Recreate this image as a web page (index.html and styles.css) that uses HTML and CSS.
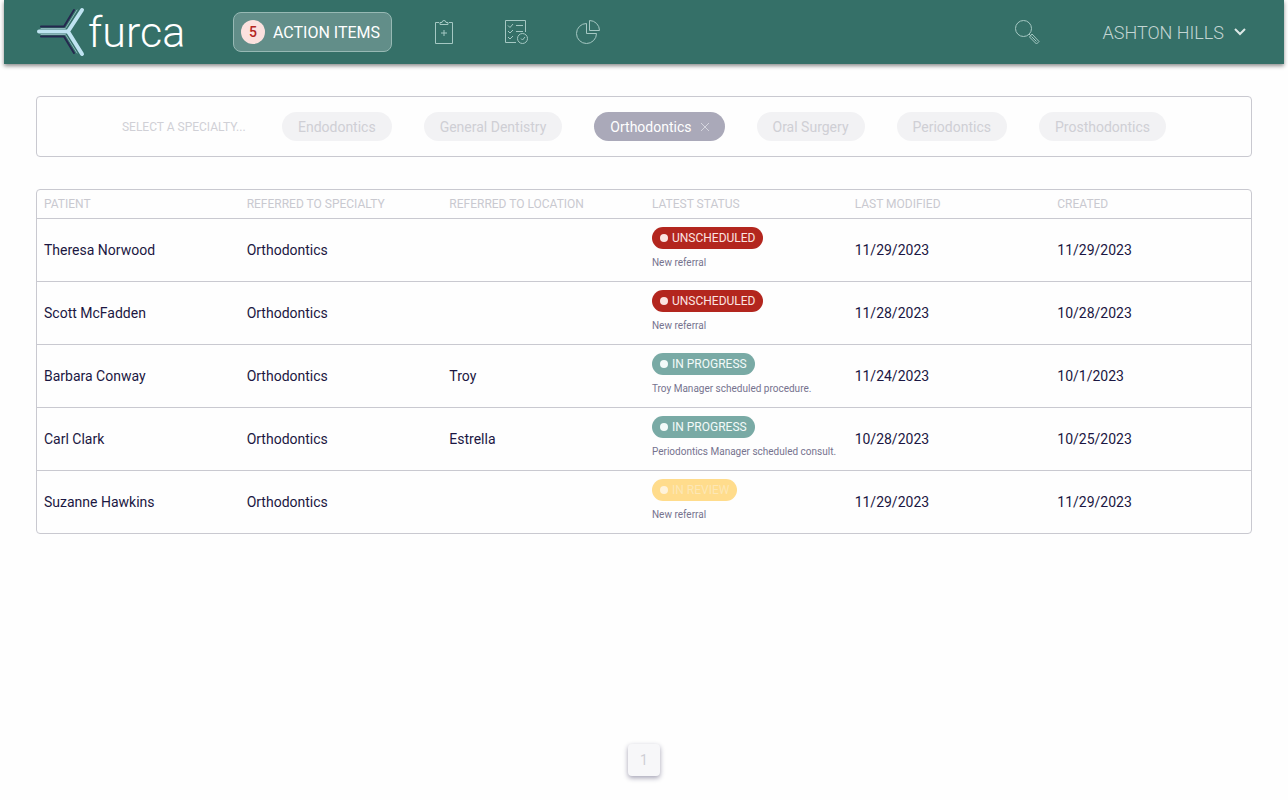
FILE: index.html
```html
<!DOCTYPE html>
<html lang="en">
<head>
<meta charset="utf-8">
<meta name="viewport" content="width=device-width, initial-scale=1">
<title>Furca – Action Items</title>
<link rel="stylesheet" href="styles.css">
</head>
<body>
<div class="app">
  <header class="topbar">
    <a class="logo" href="#" aria-label="furca">
      <svg class="logo-mark" viewBox="0 0 50 50" fill="none" stroke-linecap="round" stroke-linejoin="round" aria-hidden="true">
        <g stroke="#25284f" stroke-width="2"><path d="M5 19.500H28L38 3M5 29.500H28L38 46"/></g>
        <g stroke="#8bb5b8" stroke-width="1"><path d="M5 21.500H29.500L41 3M5 27.500H29.500L41 46"/></g>
        <path d="M3 24.500H32L46 3M32 24.500L46 47" stroke="#bfe3f1" stroke-width="4"/>
      </svg>
      <span class="logo-text">furca</span>
    </a>
    <nav class="nav" aria-label="Main">
      <a class="action-items" href="#"><span class="count">5</span>ACTION ITEMS</a>
      <a class="nav-icon" href="#" aria-label="New referral">
        <svg viewBox="0 0 26 26"><path d="M8 3.500H4.500V24.500H21.500V3.500H18M9 5.500V3.500H11Q11 1.500 13 1.500T15 3.500H17V5.500ZM13 11V17M10 14H16"/></svg>
      </a>
      <a class="nav-icon" href="#" aria-label="Task list">
        <svg viewBox="0 0 26 26"><path d="M13 23.500H2.500V1.500H22.500V13M5 6.500L7 8.500L10 5M5 12L7 14L10 11M5 18L7 20L10 17M13 6.500H20M13 12.500H20M18 19.500L19.500 21L22 18"/><circle cx="19.500" cy="19.500" r="5"/></svg>
      </a>
      <a class="nav-icon" href="#" aria-label="Reports">
        <svg viewBox="0 0 26 26"><path d="M11.500 4.500A10 10 0 1 0 21.500 14.500H11.500ZM14.500 1.500V11.500H24.500A10 10 0 0 0 14.500 1.500Z"/></svg>
      </a>
    </nav>
    <div class="tools">
      <button class="search" type="button" aria-label="Search">
        <svg viewBox="0 0 26 26"><circle cx="9.500" cy="9.500" r="8"/><path d="M15 15L17 17M18 15L25 22.500L22.500 25L15.500 18ZM17.500 17.500L22.500 22.500"/></svg>
      </button>
      <button class="user" type="button">ASHTON HILLS
        <svg viewBox="0 0 12 8" aria-hidden="true"><path d="M1 1L6 6L11 1"/></svg>
      </button>
    </div>
  </header>

  <main class="content">
    <section class="filters" aria-label="Specialty">
      <span class="filters-label">SELECT A SPECIALTY...</span>
      <button class="chip" type="button">Endodontics</button>
      <button class="chip" type="button">General Dentistry</button>
      <button class="chip chip-active" type="button" aria-pressed="true">Orthodontics
        <svg viewBox="0 0 8 8" aria-hidden="true"><path d="M0 0L8 8M8 0L0 8"/></svg>
      </button>
      <button class="chip" type="button">Oral Surgery</button>
      <button class="chip" type="button">Periodontics</button>
      <button class="chip" type="button">Prosthodontics</button>
    </section>

    <div class="table-box">
      <table class="referrals">
        <thead>
          <tr><th>PATIENT</th><th>REFERRED TO SPECIALTY</th><th>REFERRED TO LOCATION</th><th>LATEST STATUS</th><th>LAST MODIFIED</th><th>CREATED</th></tr>
        </thead>
        <tbody>
          <tr><td>Theresa Norwood</td><td>Orthodontics</td><td></td><td><span class="status unscheduled">UNSCHEDULED</span><p class="note">New referral</p></td><td>11/29/2023</td><td>11/29/2023</td></tr>
          <tr><td>Scott McFadden</td><td>Orthodontics</td><td></td><td><span class="status unscheduled">UNSCHEDULED</span><p class="note">New referral</p></td><td>11/28/2023</td><td>10/28/2023</td></tr>
          <tr><td>Barbara Conway</td><td>Orthodontics</td><td>Troy</td><td><span class="status progress">IN PROGRESS</span><p class="note">Troy Manager scheduled procedure.</p></td><td>11/24/2023</td><td>10/1/2023</td></tr>
          <tr><td>Carl Clark</td><td>Orthodontics</td><td>Estrella</td><td><span class="status progress">IN PROGRESS</span><p class="note">Periodontics Manager scheduled consult.</p></td><td>10/28/2023</td><td>10/25/2023</td></tr>
          <tr><td>Suzanne Hawkins</td><td>Orthodontics</td><td></td><td><span class="status review">IN REVIEW</span><p class="note">New referral</p></td><td>11/29/2023</td><td>11/29/2023</td></tr>
        </tbody>
      </table>
    </div>
  </main>

  <nav class="pager" aria-label="Pages">
    <button class="page" type="button" aria-current="page">1</button>
  </nav>
</div>
</body>
</html>
```
FILE: styles.css
```css
* { box-sizing: border-box; }

body {
  margin: 0;
  background: #fefefe;
  color: #1b1742;
  font-family: Roboto, "Liberation Sans", sans-serif;
  font-size: 14px;
}

button {
  margin: 0;
  border: 0;
  background: none;
  font: inherit;
  cursor: pointer;
}

a { color: inherit; text-decoration: none; }

svg { display: block; flex: none; }

.app {
  display: flex;
  flex-direction: column;
  min-height: 100vh;
  margin: 0 4px;
}

.topbar {
  display: flex;
  align-items: center;
  height: 64px;
  padding: 0 32px;
  background: #357068;
  box-shadow: 0 2px 4px rgba(0, 0, 0, 0.45);
}

.logo {
  display: flex;
  align-items: center;
  width: 197px;
}

.logo-mark { width: 50px; height: 50px; }

.logo-text {
  margin-left: 2px;
  color: #fff;
  font-size: 43px;
  font-weight: 300;
  line-height: 60px;
}

.nav {
  display: flex;
  align-items: center;
  gap: 46px;
}

.action-items {
  display: flex;
  align-items: center;
  gap: 8px;
  height: 40px;
  margin-right: -7px;
  padding: 0 11px 0 7px;
  border: 1px solid #97b9b4;
  border-radius: 8px;
  background: #628e89;
  color: #fff;
  font-size: 16px;
}

.count {
  width: 24px;
  border-radius: 12px;
  background: #fbe1de;
  color: #b3261e;
  font-size: 14px;
  font-weight: 500;
  line-height: 24px;
  text-align: center;
}

.nav-icon svg,
.search svg {
  width: 26px;
  height: 26px;
  fill: none;
  stroke: #a5c8c3;
  stroke-width: 1;
}

.tools {
  display: flex;
  align-items: center;
  gap: 63px;
  margin-left: auto;
}

.search { padding: 0; }

.user {
  display: flex;
  align-items: center;
  gap: 10px;
  padding: 0 6px 0 0;
  color: #c3d5d3;
  font-size: 18px;
  font-weight: 300;
}

.user svg {
  width: 12px;
  height: 8px;
  fill: none;
  stroke: #dce8e6;
  stroke-width: 2;
}

.content {
  display: flex;
  flex-direction: column;
  gap: 32px;
  padding: 32px;
}

.filters {
  display: flex;
  flex-wrap: wrap;
  align-items: center;
  justify-content: center;
  gap: 16px 32px;
  min-height: 61px;
  padding: 15px;
  border: 1px solid #c9c9d0;
  border-radius: 4px;
}

.filters-label {
  min-width: 128px;
  color: #d0d0d6;
  font-size: 12px;
}

.chip {
  display: flex;
  align-items: center;
  gap: 9px;
  height: 29px;
  padding: 0 16px;
  border-radius: 15px;
  background: #f2f2f4;
  color: #cfcfd5;
}

.chip-active { background: #aaa9b9; color: #fff; }

.chip-active svg {
  width: 8px;
  height: 8px;
  stroke: #d5d5de;
  stroke-width: 1;
}

.table-box {
  padding: 1px 0;
  border-radius: 4px;
  outline: 1px solid #c9c9d0;
  outline-offset: -1px;
}

.referrals {
  width: 100%;
  border-collapse: collapse;
  table-layout: fixed;
}

.referrals th {
  height: 28px;
  padding: 0 8px;
  color: #c9c9d0;
  font-size: 12px;
  font-weight: 400;
  text-align: left;
}

.referrals td {
  height: 63px;
  padding: 0 8px;
  border-top: 1px solid #c9c9d0;
}

.status {
  display: flex;
  align-items: center;
  gap: 4px;
  width: fit-content;
  height: 22px;
  padding: 0 8px;
  border-radius: 11px;
  color: #fbe4e1;
  font-size: 12px;
}

.status::before {
  width: 8px;
  height: 8px;
  border-radius: 50%;
  background: currentColor;
  content: "";
}

.unscheduled { background: #b3261e; }
.progress { background: #79aaa5; color: #f3faf9; }
.review { background: #ffdc8c; color: #fde7b5; }
.review::before { background: #fff3da; }

.note {
  margin: 8px 0 4px;
  color: #76738e;
  font-size: 10px;
  line-height: 12px;
  white-space: nowrap;
}

.pager {
  display: flex;
  justify-content: center;
  margin-top: auto;
  padding-bottom: 24px;
}

.page {
  width: 32px;
  height: 32px;
  border-radius: 4px;
  background: #f7f7f9;
  box-shadow: 0 2px 5px rgba(30, 25, 70, 0.4);
  color: #cfcfd5;
}
```
